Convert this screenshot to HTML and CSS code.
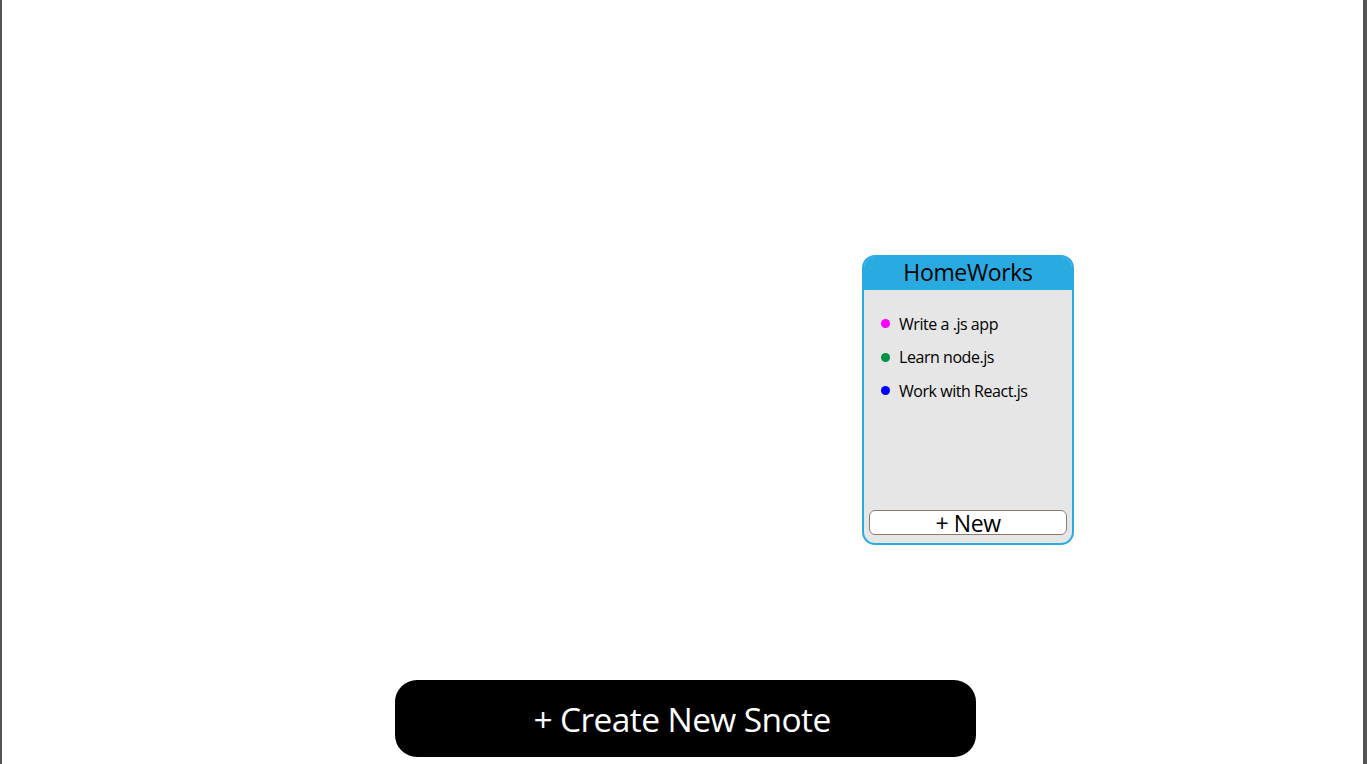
FILE: index.html
```html
<!DOCTYPE html>
<html lang="en">
<head>
<meta charset="utf-8">
<title>Snotes</title>
<link rel="stylesheet" href="styles.css">
</head>
<body>
<div class="page">
  <main class="board">
    <section class="note" style="left: 860px; top: 255px;">
      <header class="note-title">HomeWorks</header>
      <div class="note-body">
        <ul class="note-list">
          <li class="note-item"><span class="dot dot-magenta"></span>Write a .js app</li>
          <li class="note-item"><span class="dot dot-green"></span>Learn node.js</li>
          <li class="note-item"><span class="dot dot-blue"></span>Work with React.js</li>
        </ul>
        <button class="note-new">+ New</button>
      </div>
    </section>
  </main>
  <footer class="footer">
    <button class="create-btn">+ Create New Snote</button>
  </footer>
</div>
</body>
</html>
```

FILE: styles.css
```css
* { box-sizing: border-box; }

html, body {
  margin: 0;
  padding: 0;
  background: #ffffff;
}

body {
  font-family: "Open Sans", "Liberation Sans", sans-serif;
  color: #000;
}

.page {
  height: 764px;
  display: flex;
  flex-direction: column;
  border-left: 2px solid #555555;
  border-right: 4px solid #555555;
  overflow: hidden;
}

.board {
  position: relative;
  flex: 1;
}

.note {
  position: absolute;
  width: 212px;
  height: 290px;
  border: 2px solid #29abe2;
  border-radius: 13px;
  background: #e6e6e6;
  overflow: hidden;
  display: flex;
  flex-direction: column;
}

.note-title {
  height: 33px;
  background: #29abe2;
  font-size: 23px;
  letter-spacing: -0.35px;
  line-height: 30px;
  text-align: center;
  color: #000;
}

.note-body {
  flex: 1;
  display: flex;
  flex-direction: column;
  padding: 0 5px 8px;
}

.note-list {
  list-style: none;
  margin: 0;
  padding: 17px 0 0 12px;
  flex: 1;
}

.note-item {
  display: flex;
  align-items: center;
  height: 33.5px;
  font-size: 16px;
  letter-spacing: -0.45px;
  color: #000;
}

.dot {
  width: 9px;
  height: 9px;
  border-radius: 50%;
  margin-right: 9px;
  flex: none;
}

.dot-magenta { background: #ff00ff; }
.dot-green { background: #009245; }
.dot-blue { background: #0000ff; }

.note-new {
  height: 25px;
  border: 1px solid #8c7b6e;
  border-radius: 6px;
  background: #ffffff;
  font-family: inherit;
  font-size: 23px;
  letter-spacing: -0.4px;
  line-height: 22px;
  color: #000;
  padding: 0;
  cursor: pointer;
}

.footer {
  display: flex;
  justify-content: center;
  padding: 0 0 7px 6px;
}

.create-btn {
  width: 581px;
  height: 77px;
  border: none;
  border-radius: 22px;
  background: #000;
  color: #fff;
  font-family: inherit;
  font-size: 33.5px;
  letter-spacing: -0.6px;
  padding: 1px 7px 0 0;
  cursor: pointer;
}
```
